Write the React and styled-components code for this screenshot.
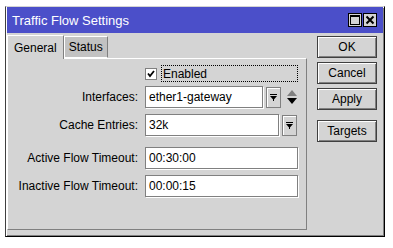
import styled, { createGlobalStyle } from "styled-components";

const Global = createGlobalStyle`
  html, body {
    margin: 0;
    padding: 0;
    background: #ffffff;
  }
  body {
    font-family: "Liberation Sans", Arial, sans-serif;
  }
`;

const Window = styled.div`
  margin: 6px 0 0 5px;
  width: 380px;
  height: 231px;
  box-sizing: border-box;
  background: #d4d4d4;
  border-top: 1px solid #d4d4d4;
  border-left: 1px solid #404040;
  border-right: 1px solid #000;
  border-bottom: 1px solid #000;
  box-shadow: inset 1px 1px 0 #fff, inset -1px -1px 0 #808080;
  display: flex;
  flex-direction: column;
`;

const TitleBar = styled.div`
  height: 26px;
  margin: 0 1px 0 1px;
  background: #4b4fc9;
  display: flex;
  align-items: center;
  justify-content: space-between;
  padding: 0 6px 0 5px;
  color: #fff;
  font-size: 13px;
`;

const TitleButtons = styled.div`
  display: flex;
  gap: 1px;
`;

const TitleButton = styled.div`
  width: 14px;
  height: 14px;
  box-sizing: border-box;
  background: #d4d4d4;
  border: 1px solid #000;
  display: flex;
  align-items: center;
  justify-content: center;
`;

const Body = styled.div`
  flex: 1;
  display: flex;
  padding: 1px 7px 6px 1px;
  gap: 10px;
`;

const TabArea = styled.div`
  width: 300px;
  display: flex;
  flex-direction: column;
`;

const TabStrip = styled.div`
  display: flex;
  align-items: flex-end;
  height: 24px;
`;

const Tab = styled.div`
  box-sizing: border-box;
  height: ${(p) => (p.$active ? "24px" : "22px")};
  padding: 0 ${(p) => (p.$active ? "6px" : "4px")};
  font-size: 12px;
  color: #000;
  background: ${(p) => (p.$active ? "#d4d4d4" : "#c2c2c2")};
  border-top: 1px solid #fff;
  border-left: 1px solid #fff;
  border-right: 1px solid #808080;
  display: flex;
  align-items: center;
  position: relative;
  margin-bottom: ${(p) => (p.$active ? "-1px" : "0")};
  z-index: ${(p) => (p.$active ? 1 : 0)};
  border-bottom: ${(p) => (p.$active ? "none" : "1px solid #fff")};
`;

const Panel = styled.div`
  flex: 1;
  box-sizing: border-box;
  border-top: 1px solid #fff;
  border-left: 1px solid #fff;
  border-right: 1px solid #808080;
  border-bottom: 1px solid #808080;
  padding: 6px 8px 0 0;
  display: grid;
  grid-template-columns: 130px 1fr;
  column-gap: 7px;
  align-content: start;
  font-size: 12px;
`;

const Label = styled.div`
  text-align: right;
  align-self: center;
  color: #000;
  margin-top: ${(p) => p.$mt || 0}px;
`;

const Cell = styled.div`
  display: flex;
  align-items: center;
  gap: 2px;
  margin-top: ${(p) => p.$mt || 0}px;
`;

const CheckWrap = styled.div`
  grid-column: 2;
  display: flex;
  align-items: center;
  gap: 4px;
`;

const CheckBox = styled.div`
  width: 12px;
  height: 12px;
  box-sizing: border-box;
  background: #fff;
  border: 1px solid #808080;
  display: flex;
  align-items: center;
  justify-content: center;
`;

const CheckLabel = styled.div`
  flex: 1;
  height: 17px;
  box-sizing: border-box;
  border: 1px dotted #000;
  display: flex;
  align-items: center;
  padding-left: 1px;
`;

const Field = styled.div`
  width: ${(p) => p.$w}px;
  height: 22px;
  box-sizing: border-box;
  background: #fff;
  border: 1px solid #808080;
  box-shadow: 1px 1px 0 #fff;
  display: flex;
  align-items: center;
  padding-left: 3px;
  color: #000;
`;

const DropButton = styled.div`
  width: 15px;
  height: 21px;
  box-sizing: border-box;
  background: #d4d4d4;
  border: 1px solid #808080;
  box-shadow: inset 1px 1px 0 #fff;
  display: flex;
  align-items: center;
  justify-content: center;
  margin-left: 1px;
`;

const Spinner = styled.div`
  margin-left: 4px;
  display: flex;
  align-items: center;
`;

const Buttons = styled.div`
  display: flex;
  flex-direction: column;
  padding-top: 2px;
`;

const Button = styled.div`
  width: 60px;
  height: 22px;
  box-sizing: border-box;
  border: 1px solid #404040;
  box-shadow: inset 1px 1px 0 #fff, inset -1px -1px 0 #808080;
  background: #d4d4d4;
  display: flex;
  align-items: center;
  justify-content: center;
  font-size: 12px;
  color: #000;
  margin-top: ${(p) => p.$mt || 0}px;
`;

function DropIcon() {
  return (
    <svg width="9" height="9" viewBox="0 0 9 9">
      <rect x="1" y="1" width="7" height="1" fill="#000" />
      <polygon points="1,3 8,3 4.5,7" fill="#000" />
      <rect x="4" y="3" width="1" height="5" fill="#000" />
    </svg>
  );
}

function SpinIcon() {
  return (
    <svg width="10" height="16" viewBox="0 0 10 16">
      <polygon points="5,1 10,7 0,7" fill="#808080" />
      <polygon points="0,9 10,9 5,15" fill="#000" />
    </svg>
  );
}

export default function App() {
  return (
    <>
      <Global />
      <Window>
        <TitleBar>
          <span>Traffic Flow Settings</span>
          <TitleButtons>
            <TitleButton>
              <svg width="10" height="10" viewBox="0 0 10 10">
                <rect x="0.5" y="0.5" width="9" height="9" fill="none" stroke="#000" />
                <rect x="0" y="0" width="10" height="2" fill="#000" />
              </svg>
            </TitleButton>
            <TitleButton>
              <svg width="10" height="10" viewBox="0 0 10 10">
                <path d="M1.5 1.5 L8.5 8.5 M8.5 1.5 L1.5 8.5" stroke="#000" strokeWidth="2" />
              </svg>
            </TitleButton>
          </TitleButtons>
        </TitleBar>
        <Body>
          <TabArea>
            <TabStrip>
              <Tab $active>General</Tab>
              <Tab>Status</Tab>
            </TabStrip>
            <Panel>
              <CheckWrap>
                <CheckBox>
                  <svg width="8" height="8" viewBox="0 0 8 8">
                    <path d="M1 3.5 L3 6 L7 1" stroke="#000" strokeWidth="1.8" fill="none" />
                  </svg>
                </CheckBox>
                <CheckLabel>Enabled</CheckLabel>
              </CheckWrap>

              <Label $mt={4}>Interfaces:</Label>
              <Cell $mt={4}>
                <Field $w={118}>ether1-gateway</Field>
                <DropButton>
                  <DropIcon />
                </DropButton>
                <Spinner>
                  <SpinIcon />
                </Spinner>
              </Cell>

              <Label $mt={6}>Cache Entries:</Label>
              <Cell $mt={6}>
                <Field $w={134}>32k</Field>
                <DropButton>
                  <DropIcon />
                </DropButton>
              </Cell>

              <Label $mt={11}>Active Flow Timeout:</Label>
              <Cell $mt={11}>
                <Field $w={153}>00:30:00</Field>
              </Cell>

              <Label $mt={6}>Inactive Flow Timeout:</Label>
              <Cell $mt={6}>
                <Field $w={153}>00:00:15</Field>
              </Cell>
            </Panel>
          </TabArea>
          <Buttons>
            <Button>OK</Button>
            <Button $mt={4}>Cancel</Button>
            <Button $mt={4}>Apply</Button>
            <Button $mt={10}>Targets</Button>
          </Buttons>
        </Body>
      </Window>
    </>
  );
}
